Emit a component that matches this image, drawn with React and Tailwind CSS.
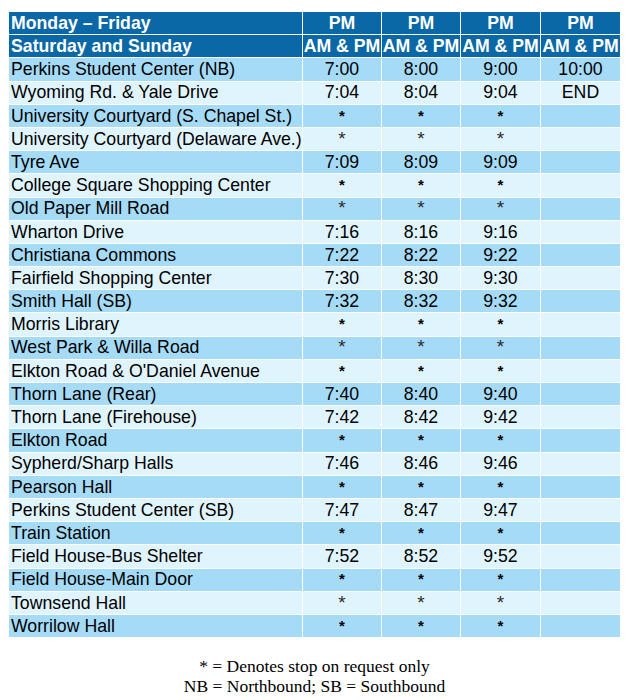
const stops = [
  ['Perkins Student Center (NB)', '7:00', '8:00', '9:00', '10:00'],
  ['Wyoming Rd. & Yale Drive', '7:04', '8:04', '9:04', 'END'],
  ['University Courtyard (S. Chapel St.)', '*', '*', '*', ''],
  ['University Courtyard (Delaware Ave.)', '*', '*', '*', '', true],
  ['Tyre Ave', '7:09', '8:09', '9:09', ''],
  ['College Square Shopping Center', '*', '*', '*', ''],
  ['Old Paper Mill Road', '*', '*', '*', '', true],
  ['Wharton Drive', '7:16', '8:16', '9:16', ''],
  ['Christiana Commons', '7:22', '8:22', '9:22', ''],
  ['Fairfield Shopping Center', '7:30', '8:30', '9:30', ''],
  ['Smith Hall (SB)', '7:32', '8:32', '9:32', ''],
  ['Morris Library', '*', '*', '*', ''],
  ['West Park & Willa Road', '*', '*', '*', '', true],
  ["Elkton Road & O'Daniel Avenue", '*', '*', '*', ''],
  ['Thorn Lane (Rear)', '7:40', '8:40', '9:40', ''],
  ['Thorn Lane (Firehouse)', '7:42', '8:42', '9:42', ''],
  ['Elkton Road', '*', '*', '*', ''],
  ['Sypherd/Sharp Halls', '7:46', '8:46', '9:46', ''],
  ['Pearson Hall', '*', '*', '*', ''],
  ['Perkins Student Center (SB)', '7:47', '8:47', '9:47', ''],
  ['Train Station', '*', '*', '*', ''],
  ['Field House-Bus Shelter', '7:52', '8:52', '9:52', ''],
  ['Field House-Main Door', '*', '*', '*', ''],
  ['Townsend Hall', '*', '*', '*', '', true],
  ['Worrilow Hall', '*', '*', '*', ''],
]

function HeadRow({ label, times }) {
  return (
    <>
      <div className="flex h-[22.2px] items-center whitespace-nowrap bg-[#0b68a6] pl-[2px] text-[17.7px] font-bold text-white">
        {label}
      </div>
      {[0, 1, 2, 3].map((i) => (
        <div
          key={i}
          className="flex h-[22.2px] items-center justify-center whitespace-nowrap bg-[#0b68a6] text-[17.7px] font-bold text-white"
        >
          {times}
        </div>
      ))}
    </>
  )
}

export default function App() {
  return (
    <div className="min-h-[700px] bg-white pt-[12px] pl-[9px] font-['Liberation_Sans',Arial,sans-serif]">
      <div className="grid w-[611px] grid-cols-[293px_78px_78px_79px_79px] gap-px bg-white">
        <HeadRow label="Monday – Friday" times="PM" />
        <HeadRow label="Saturday and Sunday" times="AM & PM" />
        {stops.map((row, r) => {
          const bg = r % 2 === 0 ? 'bg-[#a6dbf7]' : 'bg-[#e0f4fd]'
          const light = row[5]
          return (
            <div key={row[0]} className="contents">
              <div className={`flex h-[22.2px] items-center whitespace-nowrap pl-[2px] text-[17.7px] text-black ${bg}`}>
                {row[0]}
              </div>
              {row.slice(1, 5).map((t, i) =>
                t === '*' ? (
                  <div
                    key={i}
                    className={`flex h-[22.2px] items-center justify-center ${bg} ${
                      light ? 'text-[19px] text-[#2a2a2a]' : 'text-[15px] font-bold text-black'
                    }`}
                  >
                    *
                  </div>
                ) : (
                  <div key={i} className={`flex h-[22.2px] items-center justify-center text-[17.7px] text-black ${bg}`}>
                    {t}
                  </div>
                )
              )}
            </div>
          )
        })}
      </div>
      <div className="mt-[19px] w-[611px] text-center font-['Liberation_Serif','Times_New_Roman',serif] text-[17.5px] leading-[20px] text-black">
        <div>* = Denotes stop on request only</div>
        <div>NB = Northbound; SB = Southbound</div>
      </div>
    </div>
  )
}
